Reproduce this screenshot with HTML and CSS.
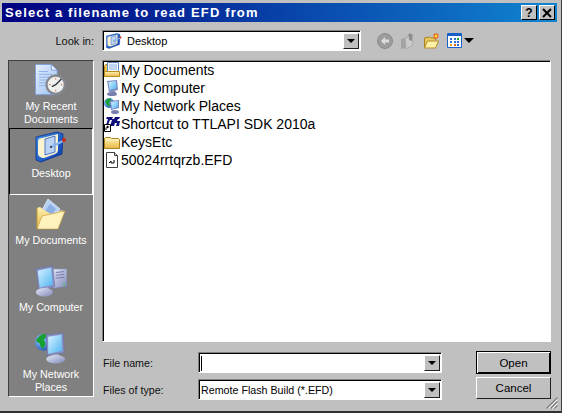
FILE: index.html
```html
<!DOCTYPE html>
<html>
<head>
<meta charset="utf-8">
<title>Select a filename to read EFD from</title>
<link rel="stylesheet" href="styles.css">
</head>
<body>
<svg class="defs" width="0" height="0">
	<defs>
		<linearGradient id="screen" x1="0" y1="0" x2="1" y2="1"><stop offset="0" stop-color="#d8f2ff"/><stop offset="1" stop-color="#4fb4f2"/></linearGradient>
		<linearGradient id="case" x1="0" y1="0" x2="1" y2="1"><stop offset="0" stop-color="#e4e8f6"/><stop offset="1" stop-color="#8088b8"/></linearGradient>
		<linearGradient id="folder" x1="0" y1="0" x2="0" y2="1"><stop offset="0" stop-color="#fff2b0"/><stop offset="1" stop-color="#e8b848"/></linearGradient>
		<linearGradient id="blue" x1="0" y1="0" x2="1" y2="1"><stop offset="0" stop-color="#3f8ee8"/><stop offset="1" stop-color="#0a3aa8"/></linearGradient>
		<linearGradient id="paper" x1="0" y1="0" x2="1" y2="1"><stop offset="0" stop-color="#e6f0ff"/><stop offset="1" stop-color="#9cc0f0"/></linearGradient>
		<radialGradient id="globe" cx=".35" cy=".35" r=".8"><stop offset="0" stop-color="#9fd0ff"/><stop offset="1" stop-color="#1048b0"/></radialGradient>

		<symbol id="i-recent" viewBox="0 0 34 34">
			<path d="M.500 .500h17l6 6v26H.500z" fill="url(#paper)" stroke="#7f9fd8"/>
			<path d="M17.500 .500v6h6z" fill="#f0f6ff" stroke="#7f9fd8"/>
			<path d="M4 8h10M4 11h14M4 14h14M4 17h9M4 20h8M4 23h7" stroke="#8fb0e4"/>
			<circle cx="22" cy="22" r="11" fill="#85898f"/>
			<circle cx="22" cy="22" r="8.500" fill="#eef0ee"/>
			<path d="M22 22l6-6M22 22l-4 2" stroke="#383840" stroke-width="1.500"/>
			<path d="M22 15v1.500M22 27.500v1.500M15 22h1.500M27.500 22h1.500" stroke="#d85030"/>
		</symbol>
		<symbol id="i-desktop" viewBox="0 0 32 32">
			<path d="M1 6l21-5 6 2-1 20-21 8-5-2z" fill="url(#blue)" stroke="#0a3090" stroke-width=".8"/>
			<path d="M3 10c0-2 2-3 4-3l16-4v16c0 2-1 3-3 4l-11 4c-3 0-6-2-6-4z" fill="#fbf3cf"/>
			<path d="M10 8l10-3v16l-10 3z" fill="#bcd4f4" stroke="#2c5cc0" stroke-width=".8"/>
			<path d="M16 16l12-6" stroke="#8ab4ee" stroke-width="2.400"/>
			<circle cx="29" cy="9" r="2" fill="#d02818"/>
			<circle cx="16" cy="16" r="1" fill="#202040"/>
		</symbol>
		<symbol id="i-docs" viewBox="0 0 32 32">
			<path d="M13 1l12 10-8 12-11-9z" fill="#b8d0f4" stroke="#dfeaff" stroke-width=".8"/>
			<path d="M15 6l6 5-5 7-6-5z" fill="#8cb0e4"/>
			<path d="M2 10l3-1 4 3 7 4 12-4-7 13-3 5H2z" fill="url(#folder)"/>
			<path d="M16 16l14-3-7 18H2l5-13z" fill="#fff2bc" stroke="#c09838" stroke-width=".6"/>
			<path d="M2 10v21" stroke="#c09838"/>
		</symbol>
		<symbol id="i-computer" viewBox="0 0 34 34">
			<path d="M18 4h16v19l-15 2z" fill="url(#case)" stroke="#6a72a0" stroke-width=".6"/>
			<path d="M22 8l9-1M22 11l9-1M22 14l9-1" stroke="#7078a8"/>
			<circle cx="31" cy="21" r="1" fill="#40d040"/>
			<path d="M1 4l18-3 2 22-17 4z" fill="#8890c4" stroke="#666ea4" stroke-width=".6"/>
			<path d="M3 6l14-3 2 18-14 3z" fill="url(#screen)"/>
			<path d="M8 25l6-2 1 5-6 1z" fill="#a0a6c8"/>
			<ellipse cx="10" cy="29" rx="9" ry="4.500" fill="url(#case)"/>
		</symbol>
		<symbol id="i-network" viewBox="0 0 34 34">
			<circle cx="9" cy="11" r="9" fill="url(#globe)"/>
			<path d="M1 9c3-5 6-7 10-7 2 2 0 5-2 6 2 2 3 6 0 9-3 1-3-2-4-5-2-1-3-1-4-3z" fill="#18a030"/>
			<path d="M12 3l18-2 1 21-18 3z" fill="#8890c4" stroke="#666ea4" stroke-width=".6"/>
			<path d="M14 5l14-2 1 17-15 3z" fill="url(#screen)"/>
			<path d="M19 24l6-1 1 5-6 1z" fill="#a0a6c8"/>
			<ellipse cx="22" cy="29" rx="10" ry="4.500" fill="url(#case)"/>
		</symbol>
		<symbol id="i-mydocs-s" viewBox="0 0 16 16">
			<path d="M.500 4.500l1-2h2v12h-3z" fill="#f0c850" stroke="#b88c20"/>
			<path d="M3.500 .500h11v9h-11z" fill="#f2f7ff" stroke="#5f8ccc"/>
			<path d="M5 3h8M5 5h8M5 7h8" stroke="#8eb2e4"/>
			<path d="M.500 9.500h15v5H.500z" fill="url(#folder)" stroke="#b88c20"/>
		</symbol>
		<symbol id="i-computer-s" viewBox="0 0 16 16">
			<path d="M3 1l10-1 1 10-9 2z" fill="#7c86c0"/>
			<path d="M4.500 2l7.500-1 .5 7.500-7 1.500z" fill="url(#screen)"/>
			<path d="M6 11h5l1 2H7z" fill="#8a90b8"/>
			<ellipse cx="8" cy="14" rx="5" ry="2" fill="#767eae"/>
		</symbol>
		<symbol id="i-network-s" viewBox="0 0 16 16">
			<circle cx="5" cy="5" r="5" fill="url(#globe)"/>
			<path d="M1 3c2-2 4-3 6-2 0 2-1 3-2 3 1 2 1 4 0 5-2-1-2-3-3-4z" fill="#18a030"/>
			<path d="M6 3l9-1v8l-8 2z" fill="#7c86c0"/>
			<path d="M7 4l7-1v6l-6 2z" fill="url(#screen)"/>
			<ellipse cx="11" cy="14" rx="4" ry="2" fill="#767eae"/>
		</symbol>
		<symbol id="i-ttl" viewBox="0 0 16 16">
			<path d="M3 1h6L8 3h2l1-2h5l-1 2h-1l-1 2h3l-1 5h-3l1-3h-2l-1 3H6l2-6H6L4 9H2l2-6H2z" fill="#10107a"/>
			<path d="M.500 8.500h6v7h-6z" fill="#fff" stroke="#000"/>
			<path d="M2 14v-2c0-1 1-1 2-1" fill="none" stroke="#000"/>
			<path d="M3 9.500L5.500 11 3 12.500z" fill="#000"/>
		</symbol>
		<symbol id="i-folder-s" viewBox="0 0 16 16">
			<path d="M.500 14.500v-10l1-1h5l1 1h7l1 1v9z" fill="url(#folder)" stroke="#a88420"/>
			<path d="M1 6h14" stroke="#fff6c8"/>
		</symbol>
		<symbol id="i-file-s" viewBox="0 0 16 16">
			<path d="M2.500 .500h8l3 3v12h-11z" fill="#fff" stroke="#404040"/>
			<path d="M10.500 .500v3h3" fill="#d0d0d0" stroke="#404040"/>
			<path d="M5 11l2-2v2h3v-3" fill="none" stroke="#000"/>
		</symbol>
		<symbol id="i-back" viewBox="0 0 16 16">
			<circle cx="8" cy="8" r="7.500" fill="#9c9c9c" stroke="#8c8c8c"/>
			<path d="M8 4L4 8l4 4V9.500h4v-3H8z" fill="#dcdcdc"/>
		</symbol>
		<symbol id="i-up" viewBox="0 0 16 16">
			<path d="M1 6l4-1 1 10-5 1z" fill="#a4a4a4"/>
			<path d="M5 5l7-2 1 9-7 4z" fill="#cacaca" stroke="#989898" stroke-width=".6"/>
			<path d="M9 7V3H7l3-3 4 3h-2v5z" fill="#8e8e8e"/>
		</symbol>
		<symbol id="i-new" viewBox="0 0 16 16">
			<path d="M.500 15V5l5-1 2 1h4v2" fill="#e8c860" stroke="#a88420"/>
			<path d="M.500 15l3-7h11l-3 7z" fill="#fff0a8" stroke="#b89028"/>
			<path d="M12 0v6M9 3h6M10 1l4 4M14 1l-4 4" stroke="#e86010" stroke-width="1.100"/>
			<circle cx="12" cy="3" r="1.500" fill="#ffd040"/>
		</symbol>
		<symbol id="i-views" viewBox="0 0 16 16">
			<path d="M.500 .500h14v14H.500z" fill="#fff" stroke="#1860c8"/>
			<path d="M1 1h13v2H1z" fill="#1860c8"/>
			<path d="M3 5h2v2H3zM3 8h2v2H3z" fill="#2870d0"/>
			<path d="M7 5h2v2H7z" fill="#2870d0"/>
			<path d="M10 5h2v2h-2z" fill="#18a030"/>
			<path d="M7 8h2v2H7z" fill="#2870d0"/>
			<path d="M10 8h2v2h-2z" fill="#2870d0"/>
			<path d="M3 11h2v2H3z" fill="#e8a020"/>
			<path d="M7 11h2v2H7z" fill="#e06020"/>
			<path d="M10 11h2v2h-2z" fill="#2870d0"/>
		</symbol>
		<symbol id="i-close" viewBox="0 0 10 10">
			<path d="M1 1l8 8M9 1l-8 8" stroke="#000" stroke-width="2"/>
		</symbol>
	</defs>
</svg>

<div class="dialog">
	<div class="titlebar">
		<span class="title">Select a filename to read EFD from</span>
		<div class="caption-btns">
			<button class="cap-btn">?</button>
			<button class="cap-btn"><svg class="ico-x"><use href="#i-close"/></svg></button>
		</div>
	</div>

	<div class="content">
		<div class="lookin-label">Look in:</div>
		<div class="lookin-row">
			<div class="combo combo-lookin">
				<div class="combo-field">
					<svg class="ico-s"><use href="#i-desktop"/></svg>
					<span>Desktop</span>
				</div>
				<div class="combo-arrow"><i></i></div>
			</div>
			<div class="toolbar">
				<svg class="tool"><use href="#i-back"/></svg>
				<svg class="tool tool-up"><use href="#i-up"/></svg>
				<svg class="tool tool-new"><use href="#i-new"/></svg>
				<svg class="tool tool-views"><use href="#i-views"/></svg>
				<i class="tool-drop"></i>
			</div>
		</div>

		<div class="places">
			<div class="place">
				<svg class="ico-l"><use href="#i-recent"/></svg>
				<span>My Recent<br>Documents</span>
			</div>
			<div class="place place-active">
				<svg class="ico-l"><use href="#i-desktop"/></svg>
				<span>Desktop</span>
			</div>
			<div class="place">
				<svg class="ico-l"><use href="#i-docs"/></svg>
				<span>My Documents</span>
			</div>
			<div class="place">
				<svg class="ico-l"><use href="#i-computer"/></svg>
				<span>My Computer</span>
			</div>
			<div class="place">
				<svg class="ico-l"><use href="#i-network"/></svg>
				<span>My Network<br>Places</span>
			</div>
		</div>

		<div class="main">
			<ul class="files">
				<li><svg class="ico-s"><use href="#i-mydocs-s"/></svg>My Documents</li>
				<li><svg class="ico-s"><use href="#i-computer-s"/></svg>My Computer</li>
				<li><svg class="ico-s"><use href="#i-network-s"/></svg>My Network Places</li>
				<li><svg class="ico-s"><use href="#i-ttl"/></svg>Shortcut to TTLAPI SDK 2010a</li>
				<li><svg class="ico-s"><use href="#i-folder-s"/></svg>KeysEtc</li>
				<li><svg class="ico-s"><use href="#i-file-s"/></svg>50024rrtqrzb.EFD</li>
			</ul>
			<div class="form">
				<div class="fields">
					<div class="field">
						<label>File name:</label>
						<div class="combo">
							<div class="combo-field"><b class="caret"></b></div>
							<div class="combo-arrow"><i></i></div>
						</div>
					</div>
					<div class="field">
						<label>Files of type:</label>
						<div class="combo">
							<div class="combo-field">Remote Flash Build (*.EFD)</div>
							<div class="combo-arrow"><i></i></div>
						</div>
					</div>
				</div>
				<div class="actions">
					<button class="btn btn-default">Open</button>
					<button class="btn">Cancel</button>
				</div>
			</div>
		</div>
	</div>
	<svg class="grip" viewBox="0 0 12 12">
		<path d="M11.500 .500l-11 11M11.500 4.500l-7 7M11.500 8.500l-3 3" stroke="#808080" stroke-width="1.200"/>
		<path d="M11.500 2.500l-9 9M11.500 6.500l-5 5M11.500 10.500l-1 1" stroke="#fff"/>
	</svg>
</div>
</body>
</html>
```

FILE: styles.css
```css
html,body{margin: 0;padding: 0;}
body{width: 562px;height: 413px;overflow: hidden;background: #c0c0c0;font-family: "Liberation Sans",Arial,sans-serif;font-size: 11px;color: #000;}
.defs{position: absolute;}
ul{margin: 0;padding: 0;list-style: none;}
button{margin: 0;padding: 0;font-family: inherit;color: #000;}

.dialog{position: relative;box-sizing: border-box;width: 562px;height: 413px;padding: 3px 4px 0 2px;border-right: 1px solid #404040;border-bottom: 2px solid #303030;}

.titlebar{display: flex;align-items: center;justify-content: space-between;height: 19px;padding: 0 2px 0 3px;background: linear-gradient(90deg,#000080,#1084d0);}
.title{color: #fff;font-weight: bold;font-size: 13px;letter-spacing: 1.150px;}
.caption-btns{display: flex;gap: 2px;}
.cap-btn{box-sizing: border-box;display: flex;align-items: center;justify-content: center;width: 16px;height: 15px;background: #c0c0c0;border: 1px solid;border-color: #fff #000 #000 #fff;font-size: 12px;font-weight: bold;}
.ico-x{display: block;width: 10px;height: 10px;}

.content{display: grid;grid-template-columns: 86px 449px;grid-template-rows: 21px auto;column-gap: 8px;row-gap: 9px;padding: 8px 0 0 6px;}

.lookin-label{align-self: center;justify-self: end;font-size: 11px;color: #111;}
.lookin-row{display: flex;align-items: center;}

.combo{box-sizing: border-box;display: flex;height: 21px;background: #fff;border: 1px solid;border-color: #808080 #fff #fff #808080;box-shadow: inset 1px 1px 0 #000;padding: 2px 1px 1px 2px;flex: 1;}
.combo-lookin{flex: 0 0 259px;}
.combo-field{flex: 1;display: flex;align-items: center;gap: 5px;font-size: 10.700px;white-space: nowrap;}
.combo-lookin .combo-field{padding-left: 1px;font-size: 11px;}
.combo-arrow{box-sizing: border-box;display: flex;align-items: center;justify-content: center;width: 16px;background: #c0c0c0;border: 1px solid;border-color: #fff #202020 #202020 #fff;}
.combo-arrow i{width: 0;height: 0;border: 4px solid transparent;border-top-color: #000;border-bottom-width: 0;}

.toolbar{display: flex;align-items: center;margin-left: 16px;}
.tool{display: block;width: 16px;height: 16px;}
.tool-up{margin-left: 7px;}
.tool-new{margin-left: 8px;}
.tool-views{margin-left: 7px;}
.tool-drop{width: 0;height: 0;margin-left: 1px;border: 5px solid transparent;border-top-color: #000;border-bottom-width: 0;}

.places{box-sizing: border-box;display: flex;flex-direction: column;height: 337px;background: #808080;border: 1px solid;border-color: #404040 #fff #fff #404040;color: #fff;font-size: 10.700px;}
.place{box-sizing: border-box;display: flex;flex-direction: column;align-items: center;height: 67px;padding-top: 3px;text-align: center;line-height: 13px;}
.place-active{border: 1px solid;border-color: #000 #fff #fff #000;padding-top: 2px;}
.place span{margin-top: 4px;}
.ico-l{display: block;width: 32px;height: 32px;flex: none;}
.ico-s{display: block;width: 16px;height: 16px;flex: none;}

.main{display: flex;flex-direction: column;}
.files{box-sizing: border-box;height: 282px;padding-left: 1px;background: #fff;border: 1px solid;border-color: #808080 #fff #fff #808080;box-shadow: inset 1px 1px 0 #000;font-size: 14px;}
.files li{display: flex;align-items: center;gap: 1px;height: 18px;white-space: nowrap;}

.form{display: flex;justify-content: space-between;margin-top: 10px;}
.fields{display: flex;flex-direction: column;gap: 6px;width: 340px;}
.field{display: flex;align-items: center;}
.field label{flex: 0 0 96px;padding-left: 1px;box-sizing: border-box;font-size: 10.700px;color: #111;}
.caret{display: block;width: 1px;height: 15px;background: #000;}

.actions{display: flex;flex-direction: column;gap: 3px;margin-top: -1px;}
.btn{box-sizing: border-box;width: 75px;height: 22px;font-size: 11.500px;background: #c0c0c0;border: 1px solid;border-color: #fff #202020 #202020 #fff;}
.btn-default{height: 23px;border: 1px solid #000;box-shadow: inset 1px 1px 0 #fff,inset -1px -1px 0 #000;}

.grip{position: absolute;right: 3px;bottom: 2px;width: 12px;height: 12px;}
```
